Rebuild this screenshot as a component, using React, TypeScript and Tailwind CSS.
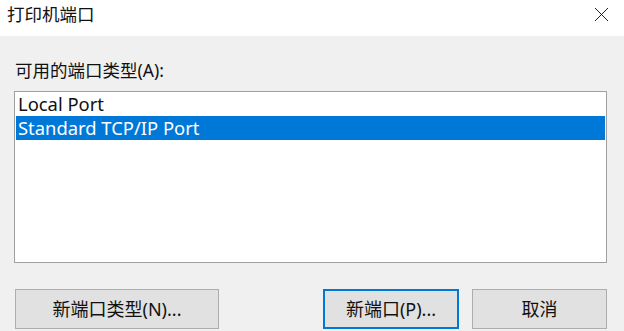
import React from "react";

const FONT = { fontFamily: '"Noto Sans", "Noto Sans CJK SC", sans-serif' };

const PORT_TYPES = ["Local Port", "Standard TCP/IP Port"];

export default function App() {
  const selected = 1;

  return (
    <div
      className="w-[624px] h-[331px] bg-[#f0f0f0] flex flex-col text-[#111] overflow-hidden"
      style={FONT}
    >
      {/* Title bar */}
      <div className="h-[36px] bg-white flex items-center justify-between pl-[7px] pr-[15px] shrink-0">
        <span className="text-[17.5px] leading-none -mt-[6px]">打印机端口</span>
        <svg width="15" height="15" viewBox="0 0 15 15" className="-mt-[8px]">
          <path d="M1 1 L14 14 M14 1 L1 14" stroke="#222" strokeWidth="1" fill="none" />
        </svg>
      </div>

      {/* Body */}
      <div className="flex flex-col pl-[14px] pr-[17px]">
        <label className="text-[17.5px] leading-[20px] mt-[24px] pl-[1px]">
          可用的端口类型(A):
        </label>
        <div className="mt-[11px] h-[172px] border border-[#a0a0a0] bg-white px-[1px]">
          {PORT_TYPES.map((t, i) => (
            <div
              key={t}
              className={
                "h-[24px] flex items-center pl-[2px] text-[18.4px] " +
                (i === selected ? "bg-[#0078d7] text-white" : "")
              }
            >
              {t}
            </div>
          ))}
        </div>

        {/* Buttons */}
        <div className="flex mt-[26px] pl-[1px]">
          <button className="w-[204px] h-[40px] bg-[#e1e1e1] border border-[#adadad] text-[18px]">
            新端口类型(N)...
          </button>
          <div className="flex-1" />
          <button className="w-[136px] h-[40px] bg-[#e1e1e1] border-2 border-[#0078d7] text-[18px]">
            新端口(P)...
          </button>
          <button className="ml-[13px] w-[135px] h-[40px] bg-[#e1e1e1] border border-[#adadad] text-[18px]">
            取消
          </button>
        </div>
      </div>
    </div>
  );
}
